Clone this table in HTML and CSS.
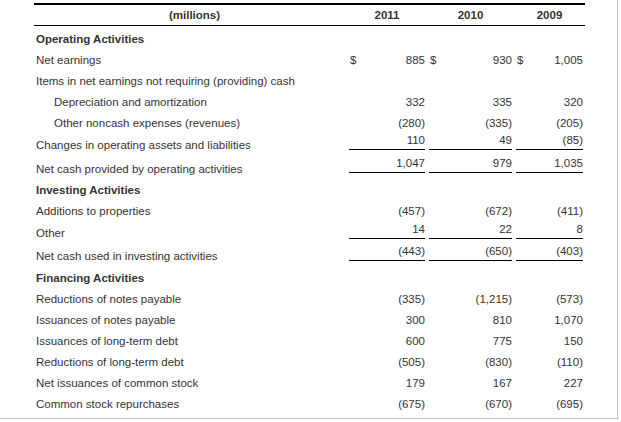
FILE: index.html
```html
<!DOCTYPE html>
<html>
<head>
<meta charset="utf-8">
<link rel="stylesheet" href="styles.css">
</head>
<body>
<div class="frame">
  <div class="table">
    <div class="row head">
      <div class="label center">(millions)</div>
      <div class="yr">2011</div>
      <div class="yr">2010</div>
      <div class="yr">2009</div>
    </div>

    <div class="row first h21">
      <div class="label section">Operating Activities</div>
    </div>
    <div class="row h21">
      <div class="label">Net earnings</div>
      <div class="val"><span>$</span><span>885</span></div>
      <div class="val"><span>$</span><span>930</span></div>
      <div class="val"><span>$</span><span>1,005</span></div>
    </div>
    <div class="row h21">
      <div class="label">Items in net earnings not requiring (providing) cash</div>
    </div>
    <div class="row h21">
      <div class="label indent">Depreciation and amortization</div>
      <div class="val">332</div>
      <div class="val">335</div>
      <div class="val">320</div>
    </div>
    <div class="row h21">
      <div class="label indent">Other noncash expenses (revenues)</div>
      <div class="val">(280)</div>
      <div class="val">(335)</div>
      <div class="val">(205)</div>
    </div>
    <div class="row h23">
      <div class="label">Changes in operating assets and liabilities</div>
      <div class="val ul">110</div>
      <div class="val ul">49</div>
      <div class="val ul">(85)</div>
    </div>
    <div class="row h24">
      <div class="label">Net cash provided by operating activities</div>
      <div class="val ul">1,047</div>
      <div class="val ul">979</div>
      <div class="val ul">1,035</div>
    </div>

    <div class="row h19">
      <div class="label section">Investing Activities</div>
    </div>
    <div class="row h22">
      <div class="label">Additions to properties</div>
      <div class="val">(457)</div>
      <div class="val">(672)</div>
      <div class="val">(411)</div>
    </div>
    <div class="row h23">
      <div class="label">Other</div>
      <div class="val ul drop">14</div>
      <div class="val ul drop">22</div>
      <div class="val ul drop">8</div>
    </div>
    <div class="row h23">
      <div class="label">Net cash used in investing activities</div>
      <div class="val ul">(443)</div>
      <div class="val ul">(650)</div>
      <div class="val ul">(403)</div>
    </div>

    <div class="row h21">
      <div class="label section">Financing Activities</div>
    </div>
    <div class="row h21">
      <div class="label">Reductions of notes payable</div>
      <div class="val">(335)</div>
      <div class="val">(1,215)</div>
      <div class="val">(573)</div>
    </div>
    <div class="row h21">
      <div class="label">Issuances of notes payable</div>
      <div class="val">300</div>
      <div class="val">810</div>
      <div class="val">1,070</div>
    </div>
    <div class="row h21">
      <div class="label">Issuances of long-term debt</div>
      <div class="val">600</div>
      <div class="val">775</div>
      <div class="val">150</div>
    </div>
    <div class="row h21">
      <div class="label">Reductions of long-term debt</div>
      <div class="val">(505)</div>
      <div class="val">(830)</div>
      <div class="val">(110)</div>
    </div>
    <div class="row h21">
      <div class="label">Net issuances of common stock</div>
      <div class="val">179</div>
      <div class="val">167</div>
      <div class="val">227</div>
    </div>
    <div class="row h21">
      <div class="label">Common stock repurchases</div>
      <div class="val">(675)</div>
      <div class="val">(670)</div>
      <div class="val">(695)</div>
    </div>
  </div>
</div>
</body>
</html>
```
FILE: styles.css
```css
html, body {
  margin: 0;
  padding: 0;
  background: #fff;
}

body {
  font-family: "Liberation Sans", Arial, Helvetica, sans-serif;
  font-size: 11.5px;
  color: #333;
}

.frame {
  width: 583px;
  height: 415px;
  padding: 3px 0 0 34px;
  border-right: 1px solid #c4c4c4;
  border-bottom: 1px solid #c4c4c4;
}

.table {
  width: 551px;
  border-top: 2px solid #000;
}

.row {
  display: grid;
  grid-template-columns: 311px 76px 83px 67px;
  column-gap: 4px;
  padding-right: 2px;
  line-height: 13px;
}

.head {
  height: 20px;
  border-bottom: 1px solid #000;
  align-items: center;
  font-weight: bold;
}

.head .center {
  text-align: center;
  padding-left: 10px;
}

.yr {
  text-align: center;
}

.first {
  margin-top: 3px;
}

.h19 { height: 19px; }
.h21 { height: 21px; }
.h22 { height: 22px; }
.h23 { height: 23px; }
.h24 { height: 24px; }

.label {
  align-self: center;
  padding-left: 2px;
  white-space: nowrap;
}

.section {
  font-weight: bold;
}

.indent {
  padding-left: 20px;
}

.val {
  align-self: center;
  display: flex;
  justify-content: flex-end;
}

.val span:first-child:not(:last-child) {
  margin-right: auto;
  padding-left: 1px;
}

.ul {
  align-self: start;
  padding-bottom: 2px;
  border-bottom: 1px solid #000;
}

.drop {
  margin-top: 1px;
}
```
